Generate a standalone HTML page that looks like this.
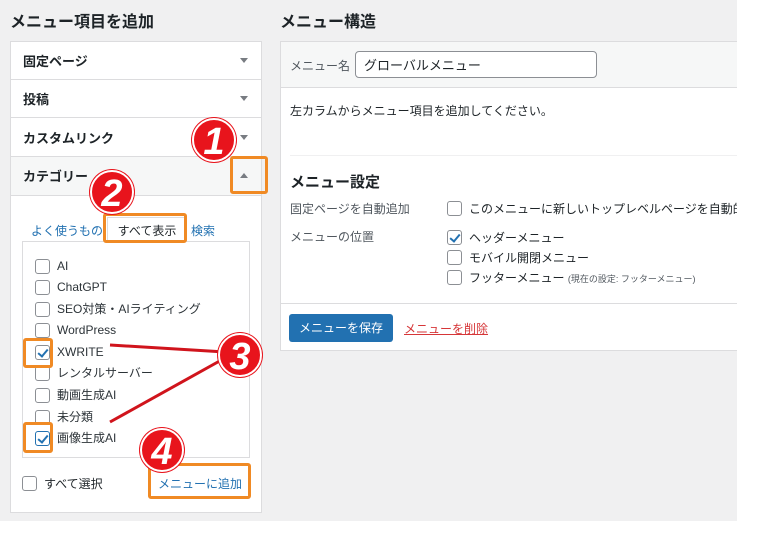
<!DOCTYPE html>
<html><head><meta charset="utf-8"><style>
*{box-sizing:border-box;margin:0;padding:0}
body{width:780px;height:533px;background:#fff;position:relative;overflow:hidden;font-family:"Liberation Sans","Noto Sans CJK JP",sans-serif;color:#1d2327;font-size:13px}
.bg{position:absolute;left:0;top:0;width:737px;height:521px;background:#f0f0f1}
.abs{position:absolute}
h2{position:absolute;font-size:16px;font-weight:bold;color:#1d2327}
.panel{position:absolute;background:#fff;border:1px solid #dcdcde}
.acc{position:absolute;left:0;width:250px;height:38px;border-bottom:1px solid #dcdcde;font-weight:bold;font-size:13px;padding:9px 12px}
.tri{position:absolute;right:13px;top:16px;width:0;height:0;border-left:4px solid transparent;border-right:4px solid transparent;border-top:5px solid #787c82}
.cb{position:absolute;width:15px;height:15px;border:1px solid #8c8f94;border-radius:3px;background:#fff}
.item{position:absolute;left:12px;font-size:12px;color:#2c3338;line-height:16px}
.item .cb{left:0;top:1px}
.item span{position:absolute;left:22px;top:0;white-space:nowrap}
.chk::after{content:"";position:absolute;left:4px;top:1px;width:4px;height:8px;border:solid #2271b1;border-width:0 2px 2px 0;transform:rotate(40deg)}
.or{position:absolute;border:3px solid #f08a24;border-radius:3px}
.num{position:absolute;width:44px;height:44px;border-radius:50%;background:#e8141c;color:#fff;font-weight:bold;font-style:italic;font-size:38px;line-height:44px;text-align:center;font-family:"Liberation Sans",sans-serif;border:2px solid #fff;box-shadow:0 0 0 1px #e8141c}
</style></head><body>
<div class="bg"></div>
<h2 style="left:10px;top:8px">メニュー項目を追加</h2>
<h2 style="left:280px;top:8px">メニュー構造</h2>

<div class="panel" style="left:10px;top:41px;width:252px;height:472px">
 <div class="acc" style="top:0">固定ページ<div class="tri"></div></div>
 <div class="acc" style="top:38px">投稿<div class="tri"></div></div>
 <div class="acc" style="top:77px">カスタムリンク<div class="tri"></div></div>
 <div class="acc" style="top:115px;background:#f6f7f7;height:39px">カテゴリー<div class="tri" style="border-top:0;border-bottom:5px solid #787c82"></div></div>
 <div class="abs" style="left:20px;top:180px;font-size:12px;color:#2271b1">よく使うもの</div>
 <div class="abs" style="left:96px;top:175px;width:80px;height:25px;border:1px solid #dcdcde;border-bottom:0;background:#fff;font-size:12px;padding:4px 0;text-align:center;white-space:nowrap">すべて表示</div>
 <div class="abs" style="left:180px;top:180px;font-size:12px;color:#2271b1">検索</div>
 <div class="abs" style="left:11px;top:199px;width:228px;height:217px;border:1px solid #dcdcde;background:#fff">
  <div class="item" style="top:16px"><div class="cb"></div><span>AI</span></div>
  <div class="item" style="top:37px"><div class="cb"></div><span>ChatGPT</span></div>
  <div class="item" style="top:59px"><div class="cb"></div><span>SEO対策・AIライティング</span></div>
  <div class="item" style="top:80px"><div class="cb"></div><span>WordPress</span></div>
  <div class="item" style="top:102px"><div class="cb chk"></div><span>XWRITE</span></div>
  <div class="item" style="top:123px"><div class="cb"></div><span>レンタルサーバー</span></div>
  <div class="item" style="top:145px"><div class="cb"></div><span>動画生成AI</span></div>
  <div class="item" style="top:167px"><div class="cb"></div><span>未分類</span></div>
  <div class="item" style="top:188px"><div class="cb chk" style="border-color:#2271b1"></div><span>画像生成AI</span></div>
 </div>
 <div class="cb" style="left:11px;top:434px"></div>
 <div class="abs" style="left:33px;top:433px;font-size:12px">すべて選択</div>
 <div class="abs" style="left:147px;top:433px;font-size:12px;color:#2271b1">メニューに追加</div>
</div>

<div class="panel" style="left:280px;top:41px;width:470px;height:310px">
 <div class="abs" style="left:0;top:0;width:470px;height:46px;background:#f6f7f7;border-bottom:1px solid #dcdcde"></div>
 <div class="abs" style="left:9px;top:15px;font-size:12px;color:#50575e">メニュー名</div>
 <div class="abs" style="left:74px;top:9px;width:242px;height:27px;border:1px solid #8c8f94;border-radius:4px;background:#fff;font-size:13px;padding:3px 8px">グローバルメニュー</div>
 <div class="abs" style="left:9px;top:60px;font-size:12px">左カラムからメニュー項目を追加してください。</div>
 <div class="abs" style="left:9px;top:113px;width:461px;height:1px;background:#f0f0f1"></div>
 <div class="abs" style="left:9px;top:129px;font-size:15px;font-weight:bold">メニュー設定</div>
 <div class="abs" style="left:9px;top:158px;font-size:12px;color:#50575e">固定ページを自動追加</div>
 <div class="abs" style="left:9px;top:186px;font-size:12px;color:#50575e">メニューの位置</div>
 <div class="cb" style="left:166px;top:159px"></div>
 <div class="abs" style="left:188px;top:158px;font-size:12px;white-space:nowrap">このメニューに新しいトップレベルページを自動的</div>
 <div class="cb chk" style="left:166px;top:188px"></div>
 <div class="abs" style="left:188px;top:187px;font-size:12px">ヘッダーメニュー</div>
 <div class="cb" style="left:166px;top:208px"></div>
 <div class="abs" style="left:188px;top:207px;font-size:12px">モバイル開閉メニュー</div>
 <div class="cb" style="left:166px;top:228px"></div>
 <div class="abs" style="left:188px;top:227px;font-size:12px;white-space:nowrap">フッターメニュー <span style="font-size:9px;color:#50575e">(現在の設定: フッターメニュー)</span></div>
 <div class="abs" style="left:0;top:261px;width:470px;height:1px;background:#dcdcde"></div>
 <div class="abs" style="left:8px;top:272px;width:104px;height:28px;background:#2271b1;border-radius:3px;color:#fff;font-size:12px;text-align:center;line-height:28px">メニューを保存</div>
 <div class="abs" style="left:123px;top:278px;font-size:12px;color:#d63638;text-decoration:underline">メニューを削除</div>
</div>
<div class="abs" style="left:737px;top:0;width:43px;height:533px;background:#fff"></div>

<svg class="abs" style="left:0;top:0" width="780" height="533">
 <line x1="110" y1="345" x2="225" y2="352" stroke="#d0141c" stroke-width="3"/>
 <line x1="110" y1="422" x2="225" y2="358" stroke="#d0141c" stroke-width="3"/>
</svg>
<div class="or" style="left:230px;top:156px;width:38px;height:38px"></div>
<div class="or" style="left:103px;top:213px;width:84px;height:30px"></div>
<div class="or" style="left:23px;top:338px;width:30px;height:30px"></div>
<div class="or" style="left:23px;top:422px;width:30px;height:31px"></div>
<div class="or" style="left:148px;top:463px;width:103px;height:36px"></div>
<div class="num" style="left:192px;top:118px">1</div>
<div class="num" style="left:90px;top:170px">2</div>
<div class="num" style="left:218px;top:333px">3</div>
<div class="num" style="left:140px;top:428px">4</div>
</body></html>
